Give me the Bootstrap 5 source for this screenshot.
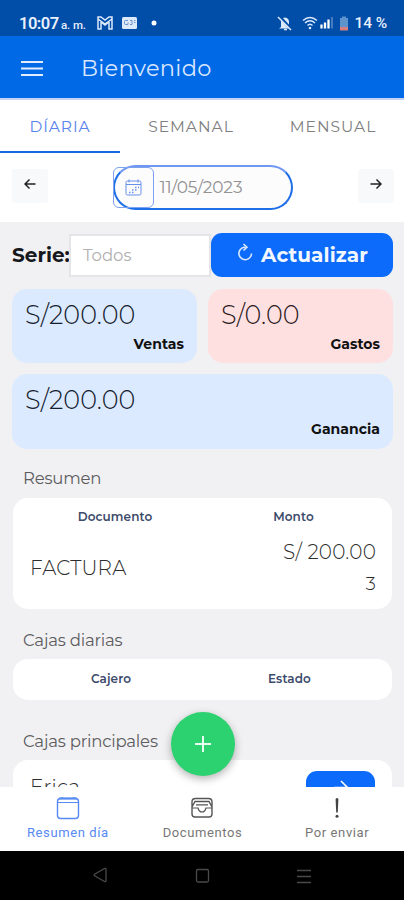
<!DOCTYPE html>
<html lang="es">
<head>
<meta charset="utf-8">
<meta name="viewport" content="width=device-width, initial-scale=1">
<title>Bienvenido</title>
<link href="https://cdn.jsdelivr.net/npm/bootstrap@5.3.0/dist/css/bootstrap.min.css" rel="stylesheet">
<style>
body{font-family:Montserrat,Inter,"Open Sans",sans-serif;background:#f1f1f3;height:900px;overflow:hidden;line-height:1.2;color:#222}
svg{display:block;flex:none}
.phone{height:900px;width:404px}
.status{height:36px;background:#004ea8;font-family:Roboto,sans-serif;color:#e8f0fc;padding:10px 17px 0 19px}
.clock{font-size:16.500px;font-weight:600;letter-spacing:-.5px;width:42px;line-height:27px}
.ampm{font-size:11.500px;font-weight:500;width:35px;line-height:30px;letter-spacing:-.1px}
.pct{font-size:15.500px;font-weight:500;letter-spacing:-.1px;white-space:nowrap;line-height:27px}
.appbar{height:64px;background:#0069e6;border-bottom:2px solid #c3d2f5;padding:0 21px}
.appbar h1{font-size:22.5px;font-weight:400;letter-spacing:.3px;color:#d8e6ff;margin:2px 0 0 38px}
.tabs{height:53px}
.tabs a{color:#808080;font-size:15.5px;font-weight:400;letter-spacing:1px;text-decoration:none;border-bottom:2px solid transparent;padding-top:3px}
.tabs a.on{color:#5683ee;border-color:#1668df;letter-spacing:.9px}
.t1{width:120px}.t2{width:142px}.t3{width:142px}
.dates{height:69px;padding:0 10px 0 12px}
.step{width:36px;height:34px;background:#f8f9fa;border-radius:3px;margin-top:-3px;padding-bottom:5px}
.picker{width:180px;height:45px;border:2px solid #1d6ee8;border-top-color:#7097f2;border-radius:23px;background:#fcfcfd;color:#929292;font-size:17px;font-weight:400;letter-spacing:-.15px;margin-right:1px}
.cal{width:41px;height:41px;border:1px solid #7da1ee;border-radius:6px;color:#668fe9;margin-left:-2px;margin-right:6px}
.content{padding:11px 11px 0 12px;flex:1;overflow:hidden}
.serie{height:44px}
.serie label{font-size:20px;font-weight:700;width:57px;color:#17181b;white-space:nowrap}
.combo{width:142px;height:43px;border:2px solid #e5e5e7;background:#fff;color:#b0b0b0;font-size:16.5px;font-weight:400;padding:1px 0 0 12px}
.refresh{width:182px;height:44px;border-radius:11px;background:#0d6bfb;border:0;font-size:20px;font-weight:700;letter-spacing:.1px;color:#f2f7ff}
.tile{height:74px;border-radius:15px;background:#dbeaff;padding:11px 13px;color:#16202d}
.tile.rose{background:#ffe0e1;color:#2c1a1c}
.amount{font-size:25.500px;font-weight:300;line-height:30px;letter-spacing:.1px}
.kind{font-size:14px;font-weight:700;line-height:18px;letter-spacing:.05px;color:#111;text-align:right;margin-top:5px}
.caption{font-size:16.5px;font-weight:400;line-height:20px;letter-spacing:-.2px;color:#5c5c5e;padding-left:11px}
.panel{background:#fff;border-radius:15px;margin:0 1px}
.thead{font-size:12px;font-weight:600;letter-spacing:.1px;color:#3c4a6b;line-height:16px}
.val{font-size:20px;font-weight:300;line-height:24px;letter-spacing:.2px;color:#2d2d2d}
.count{font-size:18.500px;margin-top:8px}
.go{width:69px;height:44px;border-radius:11px;background:#0d6bfb}
.fab{position:absolute;left:171px;top:712px;width:64px;height:64px;border-radius:50%;background:#2bd26f;box-shadow:0 3px 8px rgba(0,0,0,.3);z-index:3}
.bottom{height:64px;background:#fff;z-index:2;font-family:Roboto,sans-serif;font-size:13px;letter-spacing:.6px;color:#777}
.bottom a{color:inherit;text-decoration:none;width:33.333%;padding:9px 0 0 1px}
.bottom a.on{color:#568af2}
.keys{height:49px;background:#000;color:#4a4a4a}
</style>
<script src="https://cdn.jsdelivr.net/npm/bootstrap@5.3.0/dist/js/bootstrap.bundle.min.js"></script>
</head>
<body>
<div class="phone position-relative d-flex flex-column overflow-hidden">
  <div class="status d-flex align-items-start flex-shrink-0">
    <span class="clock">10:07</span><span class="ampm">a. m.</span>
    <svg width="66" height="26" viewBox="0 0 66 26" fill="none" stroke="#dce9fb" stroke-width="1.5"><path d="M2 7v12h3v-7l4 3 4-3v7h3V7h-3L9 10 5 7zM2 9l7 5 7-5"/><rect x="26" y="7" width="15" height="12" rx="1.5" fill="#dce9fb" stroke="none"/><path d="M32 10.500h-2.500q-1 0-1 1v2q0 1 1 1h2.500v-2M34 10.500h2v4h-2M38 10.500h1.500M38 12.500h1.500" stroke="#6d92c8" stroke-width="1"/><circle cx="58" cy="13" r="2.500" fill="#fff" stroke="none"/></svg>
    <svg class="ms-auto" width="78" height="26" viewBox="277 10 78 26" fill="none" stroke="#dce9fb"><path d="M281 27v-5q0-4 4-4.500 4 .5 4 4.500v5l2 1.500h-12z" fill="#dce9fb" stroke="none"/><path d="M284 29.500h3" stroke-width="1.500"/><path d="M279.500 16.500l12 13" stroke="#004ea8" stroke-width="3"/><path d="M278 17l13 13" stroke-width="1.500"/><path d="M303 20.500q7-6 14 0M305 23q5-4.500 10 0M307.500 25.500q2.500-2.500 5 0" stroke-width="1.500"/><circle cx="310" cy="28" r="1.300" fill="#dce9fb" stroke="none"/><path d="M321.500 28.500v-4M325 28.500v-6M328.500 28.500v-9" stroke="#fff" stroke-width="2.300"/><path d="M332 28.500v-11.500" stroke="#4d82c3" stroke-width="1.800"/><path d="M340 18h2v-1.500h4V18h2v10h-8z" fill="#5e94cc" stroke="none"/><path d="M340 27h8v3.500h-8z" fill="#d77d7c" stroke="none"/></svg>
    <span class="pct">14 %</span>
  </div>
  <header class="appbar d-flex align-items-center flex-shrink-0">
    <svg class="mt-1" width="22" height="18" viewBox="0 0 22 18" stroke="#e3edff" stroke-width="2.200"><path d="M0 2h22M0 8.500h22M0 15h22"/></svg>
    <h1>Bienvenido</h1>
  </header>
  <nav class="tabs bg-white d-flex flex-shrink-0">
    <a class="t1 on d-flex align-items-center justify-content-center" href="#">DÍARIA</a>
    <a class="t2 d-flex align-items-center justify-content-center" href="#">SEMANAL</a>
    <a class="t3 d-flex align-items-center justify-content-center" href="#">MENSUAL</a>
  </nav>
  <div class="dates bg-white d-flex align-items-center justify-content-between flex-shrink-0">
    <div class="step d-flex align-items-center justify-content-center"><svg width="12" height="12" viewBox="0 0 12 12" fill="none" stroke="#222" stroke-width="1.500"><path d="M11.500 6H1M5.500 1.500L1 6l4.500 4.500"/></svg></div>
    <div class="picker d-flex align-items-center">
      <span class="cal d-flex align-items-center justify-content-center"><svg width="17" height="17" viewBox="0 0 17 17" fill="none" stroke="currentColor"><rect x="1" y="2" width="15" height="14" rx="1.500"/><path d="M1 5.500h15M4 .5v3M13 .5v3"/><path d="M10 8.500h1.500M13 8.500h1M7 11h1.500M10 11h1.500M4 13.500h1.500M7 13.500h1.500" stroke-width="1.500"/></svg></span>
      <span>11/05/2023</span>
    </div>
    <div class="step d-flex align-items-center justify-content-center"><svg width="12" height="12" viewBox="0 0 12 12" fill="none" stroke="#222" stroke-width="1.500"><path d="M.5 6H11M6.500 1.500L11 6l-4.500 4.500"/></svg></div>
  </div>
  <main class="content">
    <div class="serie d-flex align-items-center">
      <label>Serie:</label>
      <div class="combo d-flex align-items-center">Todos</div>
      <button class="refresh d-flex align-items-center justify-content-center p-0"><svg class="me-2 mb-1" width="17" height="20" viewBox="0 0 17 20" fill="none" stroke="#d9e8ff" stroke-width="1.600"><path d="M9.500 4.200H8a6.300 6.300 0 1 0 7.500 6.300"/><path d="M7.500 1l3.500 3.200-3.500 3.300"/></svg>Actualizar</button>
    </div>
    <div class="d-flex" style="gap:11px;margin-top:12px">
      <div class="tile" style="width:185px"><div class="amount">S/200.00</div><div class="kind">Ventas</div></div>
      <div class="tile rose flex-fill"><div class="amount">S/0.00</div><div class="kind">Gastos</div></div>
    </div>
    <div class="tile" style="margin-top:11px;height:75px"><div class="amount">S/200.00</div><div class="kind">Ganancia</div></div>
    <div class="caption" style="margin:19px 0 10px">Resumen</div>
    <section class="panel" style="height:111px;padding:11px 16px 0 17px">
      <div class="thead d-flex text-center"><span class="flex-shrink-0" style="width:170px">Documento</span><span class="flex-shrink-0" style="width:187px">Monto</span></div>
      <div class="d-flex justify-content-between align-items-center" style="margin-top:15px">
        <span class="val">FACTURA</span>
        <div class="text-end val"><div>S/ 200.00</div><div class="count">3</div></div>
      </div>
    </section>
    <div class="caption" style="margin:21px 0 9px">Cajas diarias</div>
    <section class="panel" style="height:41px;padding:12px 17px 0">
      <div class="thead d-flex text-center"><span class="flex-shrink-0" style="width:162px">Cajero</span><span class="flex-shrink-0" style="width:195px">Estado</span></div>
    </section>
    <div class="caption" style="margin:31px 0 9px">Cajas principales</div>
    <section class="panel d-flex justify-content-between" style="height:111px;padding:11px 17px 0">
      <span class="val" style="margin-top:4px">Erica</span>
      <div class="go d-flex justify-content-center"><svg style="margin-top:8px" width="16" height="16" viewBox="0 0 16 16" fill="none" stroke="#fff" stroke-width="1.600"><path d="M1 8.500h14M8 2l6.500 6.500L8 15"/></svg></div>
    </section>
  </main>
  <div class="fab d-flex align-items-center justify-content-center"><svg width="18" height="18" viewBox="0 0 18 18" stroke="#e9fff2" stroke-width="2"><path d="M9 1v16M1 9h16"/></svg></div>
  <nav class="bottom d-flex flex-shrink-0">
    <a class="on d-flex flex-column align-items-center" href="#"><svg width="24" height="25" viewBox="0 0 24 25" fill="none" stroke="currentColor" stroke-width="1.400"><rect x="1.500" y="2.500" width="21" height="20" rx="3"/><path d="M2 6.500h20" stroke-width="1"/><path d="M3 2.500h18" stroke-width="2"/><path d="M6 1v2M18 1v2"/></svg><span class="mt-1">Resumen día</span></a>
    <a class="d-flex flex-column align-items-center" href="#"><svg width="24" height="25" viewBox="0 0 24 25" fill="none" stroke="#555" stroke-width="1.400"><path d="M2 9V6q0-3.500 3.500-3.500h13Q22 2.500 22 6v12q0 3-3 3H5q-3 0-3-3zM2 11l3-5.500h14l3 5.500"/><path d="M2 12h6q1 4 4 4t4-4h6M6 8.800h12" stroke-width="1.200"/></svg><span class="mt-1">Documentos</span></a>
    <a class="d-flex flex-column align-items-center" href="#"><svg width="24" height="25" viewBox="0 0 24 25" fill="#444"><path d="M10.600 3q1.400-1.800 2.800 0l-.6 13.500h-1.600z"/><circle cx="12" cy="20.300" r="1.500"/></svg><span class="mt-1">Por enviar</span></a>
  </nav>
  <div class="keys d-flex align-items-center justify-content-center flex-shrink-0">
    <svg width="220" height="18" viewBox="92 867 220 18" fill="none" stroke="currentColor" stroke-width="1.300"><path d="M94.500 875.700q-.8-.7 0-1.400l10-5.800q1.500-.7 1.500 1v11q0 1.700-1.500 1z"/><rect x="196.500" y="869.500" width="12" height="12.500" rx="1.500"/><path d="M297 870.500h14M297 876.500h14M297 882.500h14"/></svg>
  </div>
</div>
</body>
</html>
